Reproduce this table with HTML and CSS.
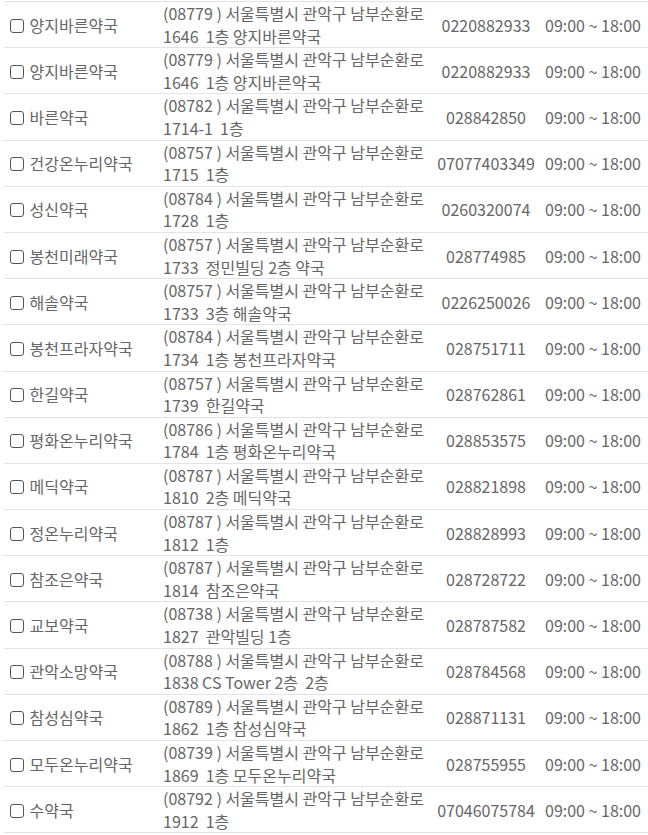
FILE: index.html
```html
<!DOCTYPE html>
<html>
<head>
<meta charset="utf-8">
<meta name="viewport" content="width=device-width, initial-scale=1">
<link rel="stylesheet" href="styles.css">
</head>
<body>
  <table class="list">
    <tbody id="rows"></tbody>
  </table>
  <script>
    var data = [
      ["양지바른약국", "08779", "1646&nbsp; 1층 양지바른약국", "0220882933"],
      ["양지바른약국", "08779", "1646&nbsp; 1층 양지바른약국", "0220882933"],
      ["바른약국", "08782", "1714-1&nbsp; 1층", "028842850"],
      ["건강온누리약국", "08757", "1715&nbsp; 1층", "07077403349"],
      ["성신약국", "08784", "1728&nbsp; 1층", "0260320074"],
      ["봉천미래약국", "08757", "1733&nbsp; 정민빌딩 2층 약국", "028774985"],
      ["해솔약국", "08757", "1733&nbsp; 3층 해솔약국", "0226250026"],
      ["봉천프라자약국", "08784", "1734&nbsp; 1층 봉천프라자약국", "028751711"],
      ["한길약국", "08757", "1739&nbsp; 한길약국", "028762861"],
      ["평화온누리약국", "08786", "1784&nbsp; 1층 평화온누리약국", "028853575"],
      ["메딕약국", "08787", "1810&nbsp; 2층 메딕약국", "028821898"],
      ["정온누리약국", "08787", "1812&nbsp; 1층", "028828993"],
      ["참조은약국", "08787", "1814&nbsp; 참조은약국", "028728722"],
      ["교보약국", "08738", "1827&nbsp; 관악빌딩 1층", "028787582"],
      ["관악소망약국", "08788", "1838 CS Tower 2층&nbsp; 2층", "028784568"],
      ["참성심약국", "08789", "1862&nbsp; 1층 참성심약국", "028871131"],
      ["모두온누리약국", "08739", "1869&nbsp; 1층 모두온누리약국", "028755955"],
      ["수약국", "08792", "1912&nbsp; 1층", "07046075784"]
    ];

    var tbody = document.getElementById("rows");
    for (var i = 0; i < data.length; i++) {
      var d = data[i];
      var tr = document.createElement("tr");
      tr.innerHTML =
        '<td class="name"><label><input type="checkbox"> ' + d[0] + '</label></td>' +
        '<td class="addr"><span>(' + d[1] + ' ) 서울특별시 관악구 남부순환로</span><span>' + d[2] + '</span></td>' +
        '<td class="tel">' + d[3] + '</td>' +
        '<td class="hours">09:00 ~ 18:00</td>';
      tbody.appendChild(tr);
    }
  </script>
</body>
</html>
```

FILE: styles.css
```css
body {
  margin: 0;
  padding: 0 0 0 4px;
  background: #fff;
  font-family: "Noto Sans CJK KR", "Noto Sans", sans-serif;
  font-size: 16px;
  color: #666;
}

.list {
  width: 644px;
  border-collapse: collapse;
  table-layout: fixed;
  margin-top: 1px;
}

.list td {
  border-top: 1px solid #e3e3e3;
  border-bottom: 1px solid #e3e3e3;
  height: 45.2px;
  padding: 0;
  vertical-align: middle;
  white-space: nowrap;
}

/* name + checkbox */
.list td.name {
  width: 152px;
  padding-left: 2px;
}

.name input {
  -webkit-appearance: none;
  appearance: none;
  box-sizing: border-box;
  width: 14px;
  height: 14px;
  margin: 0 2px 0 4px;
  border: 1.2px solid #555;
  border-radius: 3px;
  background: #fff;
  vertical-align: -1px;
}

.name input:checked {
  background: #555;
}

.list td.addr {
  width: 271px;
  padding-left: 5px;
  line-height: 22.6px;
}

.addr span {
  display: block;
}

.list td.tel {
  width: 104px;
  text-align: center;
}

.list td.hours {
  text-align: center;
}
```
